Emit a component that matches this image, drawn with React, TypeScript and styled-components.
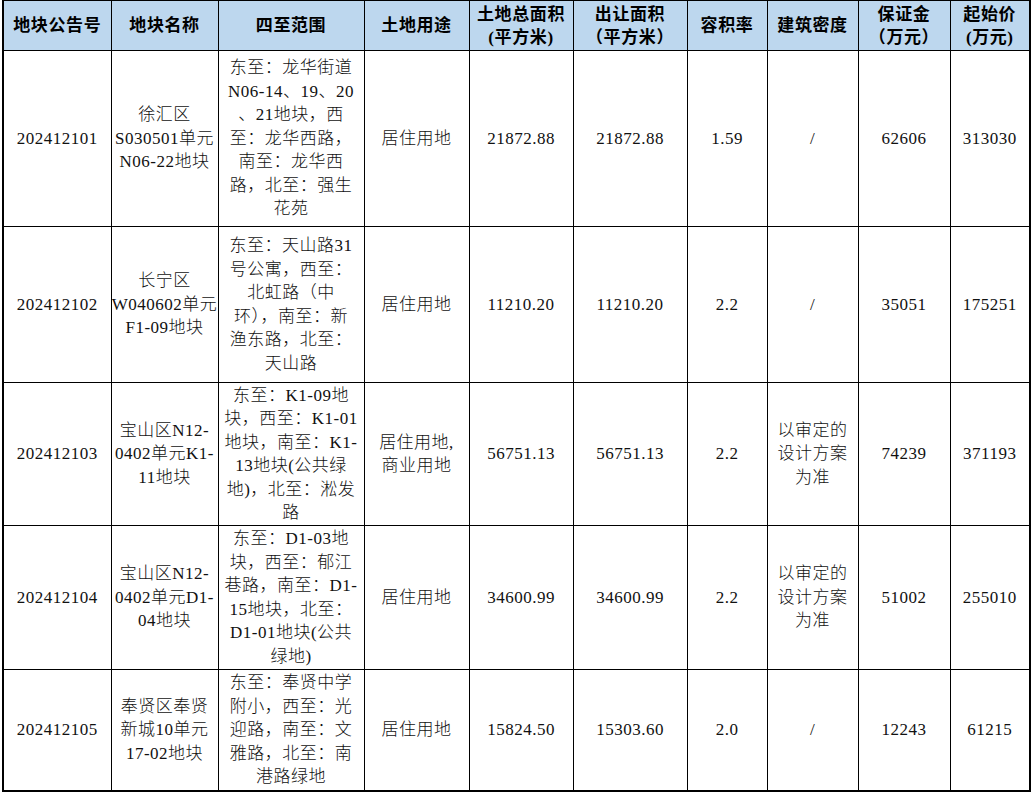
import { FC } from 'react'
import styled, { createGlobalStyle } from 'styled-components'

const GlobalStyle = createGlobalStyle`
  html, body {
    margin: 0;
    padding: 0;
    background: #fff;
  }
  body {
    font-family: "Liberation Serif", "Noto Sans CJK SC", serif;
    color: #000;
  }
`

const Sheet = styled.div`
  padding: 0 0 0 2px;
  width: 1034px;
  height: 794px;
  box-sizing: border-box;
  overflow: hidden;
`

const Table = styled.table`
  border-collapse: collapse;
  table-layout: fixed;
  width: 1029px;
  border-left: 2px solid #000;
  border-right: 2px solid #000;
  border-bottom: 2px solid #000;
  border-top: 1px solid #000;
`

const Row = styled.tr<{ $h: number }>`
  height: ${p => p.$h}px;
`

const HeadCell = styled.th`
  background: #bdd7ee;
  border: 1px solid #000;
  padding: 0;
  text-align: center;
  vertical-align: middle;
  font-family: "Liberation Serif", "Noto Sans CJK SC", serif;
  font-weight: 700;
  font-size: 17px;
  letter-spacing: 0.6px;
  line-height: 23px;
  white-space: nowrap;
`

const Cell = styled.td`
  border: 1px solid #000;
  padding: 0;
  text-align: center;
  vertical-align: middle;
  font-size: 17px;
  font-weight: 300;
  letter-spacing: 0.5px;
  line-height: 23.5px;
  white-space: nowrap;
  color: #111;
`

const Line = styled.div``

const widths = [108, 107, 146, 105, 104, 114, 80, 91, 92, 80]

const headers: string[][] = [
  ['地块公告号'],
  ['地块名称'],
  ['四至范围'],
  ['土地用途'],
  ['土地总面积', '(平方米)'],
  ['出让面积', '（平方米）'],
  ['容积率'],
  ['建筑密度'],
  ['保证金', '（万元）'],
  ['起始价', '(万元)'],
]

interface Parcel {
  h: number
  cells: string[][]
}

const parcels: Parcel[] = [
  {
    h: 176,
    cells: [
      ['202412101'],
      ['徐汇区', 'S030501单元', 'N06-22地块'],
      ['东至：龙华街道', 'N06-14、19、20', '、21地块，西', '至：龙华西路，', '南至：龙华西', '路，北至：强生', '花苑'],
      ['居住用地'],
      ['21872.88'],
      ['21872.88'],
      ['1.59'],
      ['/'],
      ['62606'],
      ['313030'],
    ],
  },
  {
    h: 156,
    cells: [
      ['202412102'],
      ['长宁区', 'W040602单元', 'F1-09地块'],
      ['东至：天山路31', '号公寓，西至：', '北虹路（中', '环），南至：新', '渔东路，北至：', '天山路'],
      ['居住用地'],
      ['11210.20'],
      ['11210.20'],
      ['2.2'],
      ['/'],
      ['35051'],
      ['175251'],
    ],
  },
  {
    h: 143,
    cells: [
      ['202412103'],
      ['宝山区N12-', '0402单元K1-', '11地块'],
      ['东至：K1-09地', '块，西至：K1-01', '地块，南至：K1-', '13地块(公共绿', '地)，北至：淞发', '路'],
      ['居住用地,', '商业用地'],
      ['56751.13'],
      ['56751.13'],
      ['2.2'],
      ['以审定的', '设计方案', '为准'],
      ['74239'],
      ['371193'],
    ],
  },
  {
    h: 144,
    cells: [
      ['202412104'],
      ['宝山区N12-', '0402单元D1-', '04地块'],
      ['东至：D1-03地', '块，西至：郁江', '巷路，南至：D1-', '15地块，北至：', 'D1-01地块(公共', '绿地)'],
      ['居住用地'],
      ['34600.99'],
      ['34600.99'],
      ['2.2'],
      ['以审定的', '设计方案', '为准'],
      ['51002'],
      ['255010'],
    ],
  },
  {
    h: 121,
    cells: [
      ['202412105'],
      ['奉贤区奉贤', '新城10单元', '17-02地块'],
      ['东至：奉贤中学', '附小，西至：光', '迎路，南至：文', '雅路，北至：南', '港路绿地'],
      ['居住用地'],
      ['15824.50'],
      ['15303.60'],
      ['2.0'],
      ['/'],
      ['12243'],
      ['61215'],
    ],
  },
]

const Lines: FC<{ text: string[] }> = ({ text }) => (
  <>
    {text.map((t, i) => (
      <Line key={i}>{t}</Line>
    ))}
  </>
)

const App: FC = () => {
  return (
    <Sheet>
      <GlobalStyle />
      <Table>
        <colgroup>
          {widths.map((w, i) => (
            <col key={i} style={{ width: `${w}px` }} />
          ))}
        </colgroup>
        <thead>
          <Row $h={50}>
            {headers.map((h, i) => (
              <HeadCell key={i}>
                <Lines text={h} />
              </HeadCell>
            ))}
          </Row>
        </thead>
        <tbody>
          {parcels.map((p, r) => (
            <Row key={r} $h={p.h}>
              {p.cells.map((c, i) => (
                <Cell key={i}>
                  <Lines text={c} />
                </Cell>
              ))}
            </Row>
          ))}
        </tbody>
      </Table>
    </Sheet>
  )
}

export default App
